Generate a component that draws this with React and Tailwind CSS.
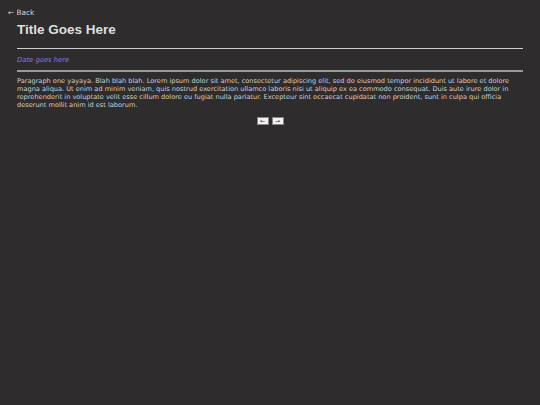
export default function App() {
  return (
    <div className="min-h-[405px] w-full bg-[#2f2c2d] pt-[8px] pb-4 font-['DejaVu_Sans',sans-serif] antialiased">
      <a className="ml-[8px] block text-[7.3px] leading-[10px] text-[#d8d8d8]">← Back</a>
      <div className="mx-[17px]">
        <h1 className="mt-[3px] font-['Liberation_Sans',sans-serif] text-[13.5px] font-bold leading-[18px] text-[#dedede]">
          Title Goes Here
        </h1>
        <hr className="mt-[9px] border-0 border-t border-[#cfcfcf]" />
        <p className="mt-[7px] text-[6.8px] font-normal italic leading-[9px] text-[#8e72e0]">Date goes here</p>
        <hr className="mt-[5px] border-0 h-[2px] bg-[#9a9a9a]" />
        <p className="mt-[5px] text-[6.6px] leading-[8px] text-[#cfcfcf]">
          Paragraph one yayaya. Blah blah blah. Lorem ipsum dolor sit amet, consectetur adipiscing elit, sed do eiusmod tempor incididunt ut labore et dolore magna aliqua. Ut enim ad minim veniam, quis nostrud exercitation ullamco laboris nisi ut aliquip ex ea commodo consequat. Duis aute irure dolor in reprehenderit in voluptate velit esse cillum dolore eu fugiat nulla pariatur. Excepteur sint occaecat cupidatat non proident, sunt in culpa qui officia deserunt mollit anim id est laborum.
        </p>
        <div className="mt-[8px] flex justify-center gap-[3px]">
          <button className="flex h-[8px] w-[12px] items-center justify-center border border-[#888] bg-[#f2f2f2] text-[6px] leading-none text-[#333]">←</button>
          <button className="flex h-[8px] w-[12px] items-center justify-center border border-[#888] bg-[#f2f2f2] text-[6px] leading-none text-[#333]">→</button>
        </div>
      </div>
    </div>
  );
}
